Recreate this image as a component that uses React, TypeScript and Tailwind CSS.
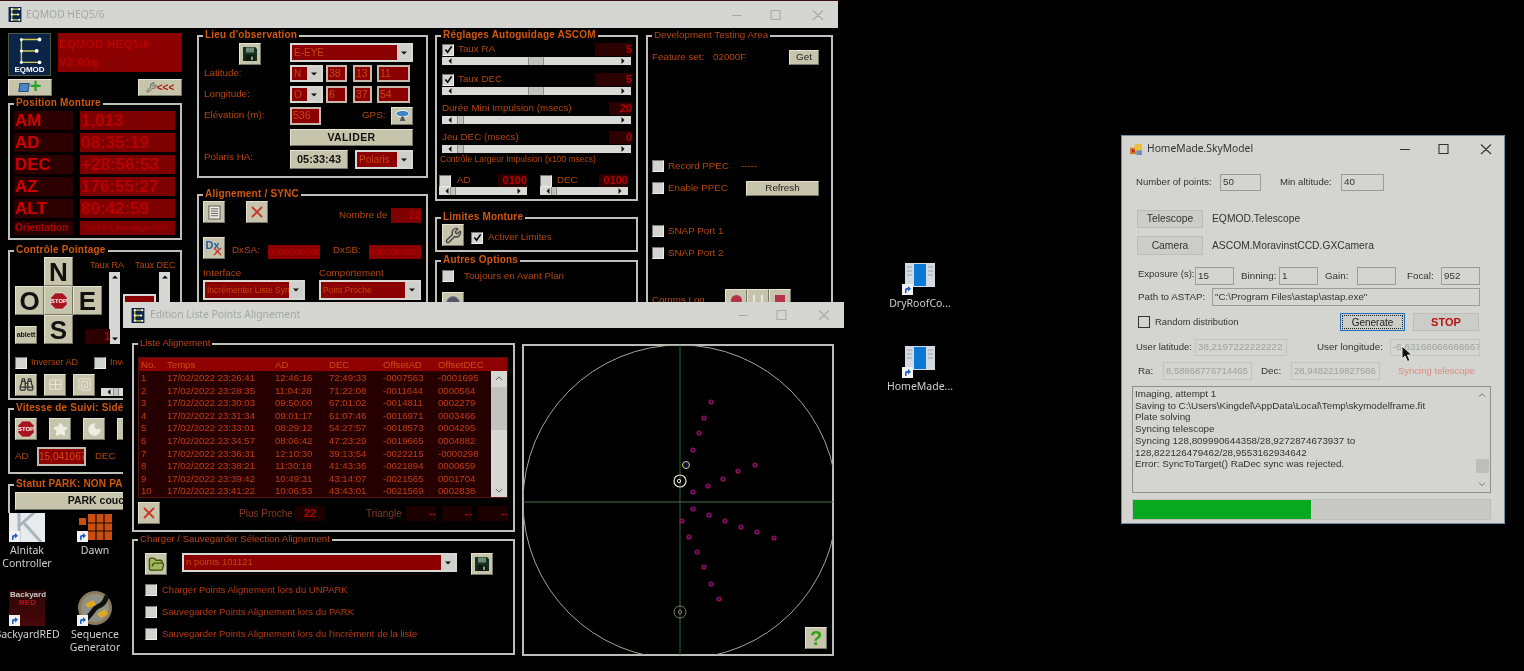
import React from 'react';
import { Binoculars, FolderOpen, Moon, Star, Wrench, X } from 'lucide-react';

const Bevel: React.FC<{ className?: string; children?: React.ReactNode }> = ({ className = '', children }) => (
  <div
    className={`flex items-center justify-center shrink-0 overflow-hidden bg-[#c6c4ab] border border-t-[#e4e3d2] border-l-[#e4e3d2] border-r-[#77766a] border-b-[#77766a] ${className}`}
  >
    {children}
  </div>
);

const Group: React.FC<{ title: string; titleClass?: string; className?: string; children?: React.ReactNode }> = ({
  title,
  titleClass = 'font-bold text-[#d0570c] tracking-[0.2px] text-[10px]',
  className = '',
  children,
}) => (
  <div className={`relative border-2 border-[#c0c0bb] ${className}`}>
    <span className={`absolute -top-[9px] left-[4px] bg-black px-[2px] leading-[14px] whitespace-nowrap ${titleClass}`}>
      {title}
    </span>
    {children}
  </div>
);

const Check: React.FC<{ on?: boolean; className?: string }> = ({ on, className = '' }) => (
  <div
    className={`w-[12px] h-[12px] shrink-0 bg-[#d2d2ce] border border-t-[#77776f] border-l-[#77776f] border-r-[#eee] border-b-[#eee] flex items-center justify-center ${className}`}
  >
    {on && (
      <svg viewBox="0 0 10 10" className="w-[9px] h-[9px]">
        <path d="M1.5 5l2.5 3 4.5-6.5" fill="none" stroke="#000" strokeWidth="1.8" />
      </svg>
    )}
  </div>
);

const Arrow: React.FC<{ dir?: 'down' | 'up' | 'left' | 'right' }> = ({ dir = 'down' }) => {
  const d = { down: 'M0 0h6L3 3z', up: 'M0 3h6L3 0z', left: 'M3 0v6L0 3z', right: 'M0 0v6l3-3z' }[dir];
  return (
    <svg viewBox="0 0 6 6" className="w-[6px] h-[6px]">
      <path d={d} fill="#111" transform={dir === 'down' || dir === 'up' ? 'translate(0 1.5)' : 'translate(1.5 0)'} />
    </svg>
  );
};

const Select: React.FC<{ text: string; className?: string; textClass?: string }> = ({
  text,
  className = '',
  textClass = 'text-[10px]',
}) => (
  <div className={`flex shrink-0 bg-[#d7d7d3] p-[2px] ${className}`}>
    <div className={`flex-1 min-w-0 overflow-hidden whitespace-nowrap bg-[#8b0000] text-[#c8470f] pl-[2px] flex items-center ${textClass}`}>
      {text}
    </div>
    <div className="w-[14px] flex items-center justify-center bg-[#cfcfcb]">
      <Arrow />
    </div>
  </div>
);

const RedBox: React.FC<{ text?: string; className?: string }> = ({ text, className = '' }) => (
  <div className={`shrink-0 overflow-hidden bg-[#8b0000] border-2 border-[#c7b8ac] text-[#c8470f] text-[10.5px] pl-[1px] leading-[13px] ${className}`}>
    {text}
  </div>
);

const ValueBox: React.FC<{ text?: string; className?: string; tone?: string }> = ({
  text,
  className = '',
  tone = 'bg-[#2c0000] text-[#b80000]',
}) => (
  <div className={`shrink-0 font-bold text-[11px] flex items-center leading-none overflow-hidden ${tone} ${className}`}>{text}</div>
);

const HScroll: React.FC<{ thumb: number; thumbW?: number; className?: string }> = ({ thumb, thumbW = 16, className = '' }) => (
  <div className={`relative h-[8px] bg-[#d9d9d5] flex items-center justify-between px-[5px] shrink-0 ${className}`}>
    <Arrow dir="left" />
    <Arrow dir="right" />
    <div className="absolute top-0 h-[8px] bg-[#c3c3be] border-x border-[#8f8f89]" style={{ left: thumb, width: thumbW }} />
  </div>
);

const VScroll: React.FC<{ className?: string }> = ({ className = '' }) => (
  <div className={`flex flex-col items-center justify-between bg-[#d7d7d3] py-[2px] w-[11px] ${className}`}>
    <Arrow dir="up" />
    <Arrow dir="down" />
  </div>
);

const Floppy: React.FC = () => (
  <svg viewBox="0 0 16 16" className="w-[16px] h-[16px]">
    <path d="M1 1h12l2 2v12H1z" fill="#16301f" />
    <rect x="4" y="1.500" width="8" height="5" fill="#6f8a72" />
    <rect x="3.500" y="9" width="9" height="6" fill="#0c1a10" />
    <rect x="9" y="10.500" width="2" height="3.500" fill="#8f9a8d" />
  </svg>
);

const StopSign: React.FC = () => (
  <svg viewBox="0 0 20 20" className="w-[18px] h-[18px]">
    <path d="M6 1h8l5 5v8l-5 5H6l-5-5V6z" fill="#a81420" stroke="#e8d8d8" strokeWidth="0.8" />
    <text x="10" y="12.500" textAnchor="middle" fontSize="6.600" fontWeight="bold" fill="#fff" fontFamily="Liberation Sans">
      STOP
    </text>
  </svg>
);

const RedCross: React.FC = () => <X className="w-[18px] h-[18px] text-[#c9382a]" strokeWidth={2.4} />;

const WinControls: React.FC<{ className?: string; color?: string }> = ({ className = '', color = 'stroke-[#a8aaa6]' }) => (
  <svg viewBox="0 0 100 12" className={`w-[100px] h-[12px] fill-none ${color} ${className}`}>
    <path d="M2 6.500h10M41 1.500h9v9H41zM83 1.500l10 9.500M93 1.500l-10 9.500" strokeWidth="1.1" />
  </svg>
);

const EqmodGlyph: React.FC<{ className?: string }> = ({ className = '' }) => (
  <svg viewBox="0 0 12 14" className={className}>
    <rect width="12" height="14" fill="#0b2447" />
    <path d="M3 2h7M3 7h6M3 12h7M3 2v10" stroke="#c9cf57" strokeWidth="1.2" />
    <g fill="#fff">
      <circle cx="10" cy="2" r="1" />
      <circle cx="9" cy="7" r="1" />
      <circle cx="10" cy="12" r="1" />
      <circle cx="3" cy="2" r="1" />
      <circle cx="3" cy="7" r="1" />
      <circle cx="3" cy="12" r="1" />
    </g>
  </svg>
);

const positionRows = [
  { label: 'AM', value: '1,013' },
  { label: 'AD', value: '08:35:19' },
  { label: 'DEC', value: '+28:56:53' },
  { label: 'AZ', value: '176:55:27' },
  { label: 'ALT', value: '80:42:59' },
];

const LeftColumn: React.FC = () => (
  <div className="w-[174px] shrink-0">
    <div className="flex">
      <div className="w-[43px] h-[43px] bg-[#0b2447] border border-[#4a5a3a] relative flex flex-col items-center shrink-0">
        <svg viewBox="0 0 43 31" className="w-[41px] h-[31px]">
          <path d="M13 5h19M13 17h16M13 29h19M13 5v24" stroke="#c9cf57" strokeWidth="1.5" fill="none" />
          <g fill="#fff">
            <circle cx="32" cy="5" r="2" />
            <circle cx="29" cy="17" r="2" />
            <circle cx="32" cy="29" r="2" />
            <circle cx="13" cy="5" r="1.600" />
            <circle cx="13" cy="17" r="1.600" />
            <circle cx="13" cy="29" r="1.600" />
          </g>
        </svg>
        <span className="text-[8px] font-bold text-white leading-[9px]">EQMOD</span>
      </div>
      <div className="ml-[7px] w-[124px] h-[39px] bg-[#8b0000] text-[#bd0000] font-bold text-[11px] tracking-[0.6px] leading-[18px] pl-[1px] pt-[2px]">
        <div>EQMOD HEQ5/6</div>
        <div>V2.00q</div>
      </div>
    </div>
    <div className="flex justify-between mt-[3px]">
      <Bevel className="w-[44px] h-[17px] gap-[1px]">
        <span className="w-[10px] h-[9px] bg-[#4d86c4] border border-[#26507f] skew-x-[-8deg]" />
        <span className="text-[#22a52b] text-[20px] font-bold leading-none -mt-[3px]">+</span>
      </Bevel>
      <Bevel className="w-[44px] h-[17px]">
        <Wrench className="w-[11px] h-[11px] text-[#555]" />
        <span className="text-[#b3130c] font-bold text-[10px] leading-none">&lt;&lt;&lt;</span>
      </Bevel>
    </div>

    <Group title="Position Monture" className="mt-[7px] h-[137px] pl-[4px] pt-[6px]">
      <div className="flex flex-col gap-[3px]">
        {positionRows.map((row) => (
          <div key={row.label} className="flex gap-[7px] h-[19px]">
            <div className="w-[59px] bg-[#2c0000] text-[#d00000] font-bold text-[17px] leading-[19px] pl-[1px]">{row.label}</div>
            <div className="w-[95px] bg-[#7f0000] text-[#b80000] font-bold text-[17px] leading-[19px] pl-[1px]">{row.value}</div>
          </div>
        ))}
        <div className="flex gap-[7px] h-[14px]">
          <div className="w-[59px] bg-[#2c0000] text-[#b00000] font-bold text-[10px] leading-[14px] pl-[1px]">Orientation</div>
          <div className="w-[95px] bg-[#7f0000] text-[#a80000] font-bold text-[8px] leading-[14px] whitespace-nowrap overflow-hidden pl-[1px]">
            "OUEST, Pointage EST"
          </div>
        </div>
      </div>
    </Group>

    <Group title="Contrôle Pointage" className="mt-[10px] h-[150px] pl-[5px] pt-[5px]">
      <div className="grid grid-cols-[29px_29px_29px_7px_11px_3px_33px_3px_11px] grid-rows-[29px_29px_29px]">
        <Bevel className="col-start-2 row-start-1 text-[26px] font-bold leading-none text-[#111]">N</Bevel>
        <span className="col-start-3 row-start-1 ml-[17px] mt-[2px] text-[9px] text-[#b5460e] whitespace-nowrap">Taux RA</span>
        <span className="col-start-7 row-start-1 ml-[12px] mt-[2px] text-[9px] text-[#b5460e] whitespace-nowrap">Taux DEC</span>
        <VScroll className="col-start-5 row-start-1 row-span-3 mt-[15px]" />
        <VScroll className="col-start-9 row-start-1 row-span-3 mt-[15px]" />
        <div className="col-start-7 row-start-2 row-span-2 mt-[8px] h-[20px] border-2 border-[#d7d7d3] bg-[#8b0000]" />
        <Bevel className="col-start-1 row-start-2 text-[26px] font-bold leading-none text-[#111]">O</Bevel>
        <Bevel className="col-start-2 row-start-2">
          <StopSign />
        </Bevel>
        <Bevel className="col-start-3 row-start-2 text-[26px] font-bold leading-none text-[#111]">E</Bevel>
        <Bevel className="col-start-1 row-start-3 self-end w-[22px] h-[18px] text-[7px] font-bold text-[#111]">ablett</Bevel>
        <Bevel className="col-start-2 row-start-3 text-[26px] font-bold leading-none text-[#111]">S</Bevel>
        <div className="col-start-3 row-start-3 col-span-3 self-end ml-[12px] w-[25px] h-[15px] bg-[#2c0000] text-[#b80000] text-[10px] font-bold text-right leading-[15px]">
          1
        </div>
      </div>
      <div className="flex items-center mt-[12px] text-[9px] text-[#b5460e]">
        <Check />
        <span className="ml-[4px] w-[63px]">Inverser AD</span>
        <Check />
        <span className="ml-[4px]">Inverser DEC</span>
      </div>
      <div className="flex mt-[4px] gap-[7px]">
        <Bevel className="w-[22px] h-[22px]">
          <Binoculars className="w-[15px] h-[15px] text-[#333]" />
        </Bevel>
        <Bevel className="w-[22px] h-[22px]">
          <svg viewBox="0 0 16 16" className="w-[15px] h-[15px] fill-none stroke-[#e9e8dc]">
            <path d="M2 3h12v10H2zM2 8h12M8 3v10" />
          </svg>
        </Bevel>
        <Bevel className="w-[22px] h-[22px]">
          <svg viewBox="0 0 16 16" className="w-[15px] h-[15px] fill-none stroke-[#e9e8dc]">
            <path d="M2 14V2h12v12H5V5h6v6H8V8" />
          </svg>
        </Bevel>
        <HScroll thumb={12} thumbW={6} className="w-[40px] mt-[14px] -ml-[1px]" />
      </div>
    </Group>

    <Group title="Vitesse de Suivi: Sidéral" className="mt-[8px] h-[66px] pl-[5px] pt-[8px]">
      <div className="flex gap-[12px]">
        <Bevel className="w-[22px] h-[22px]">
          <StopSign />
        </Bevel>
        <Bevel className="w-[22px] h-[22px]">
          <Star className="w-[15px] h-[15px] fill-[#eeeee4] text-[#eeeee4]" />
        </Bevel>
        <Bevel className="w-[22px] h-[22px]">
          <Moon className="w-[15px] h-[15px] fill-[#eeeee4] text-[#eeeee4]" />
        </Bevel>
        <Bevel className="w-[22px] h-[22px]" />
      </div>
      <div className="flex items-center mt-[7px] text-[9.800px] text-[#b5460e]">
        <span className="w-[22px]">AD</span>
        <div className="w-[49px] h-[19px] bg-[#8b0000] border-2 border-[#c7b8ac] text-[#d0470f] text-[10px] leading-[15px] overflow-hidden whitespace-nowrap">
          15,041067
        </div>
        <span className="ml-[9px]">DEC</span>
      </div>
    </Group>

    <Group title="Statut PARK: NON PARKÉ" className="mt-[10px] h-[40px] pl-[5px] pt-[6px]">
      <Bevel className="h-[18px] w-[160px] pl-[14px] text-[10.500px] font-bold text-[#111]">PARK couché</Bevel>
    </Group>
  </div>
);

const latLon = [
  { label: 'Latitude:', hemi: 'N', vals: ['38', '13', '11'] },
  { label: 'Longitude:', hemi: 'O', vals: ['6', '37', '54'] },
];

const ObservationColumn: React.FC = () => (
  <div className="w-[231px] ml-[15px] mt-[2px] shrink-0">
    <Group title="Lieu d'observation" className="h-[143px] pl-[5px] pt-[6px] text-[9.800px] text-[#b5460e]">
      <div className="flex h-[19px]">
        <Bevel className="ml-[35px] w-[22px] h-[22px]">
          <Floppy />
        </Bevel>
        <Select text="E-EYE" className="ml-[29px] w-[123px] h-[19px]" />
      </div>
      {latLon.map((row, i) => (
        <div key={row.label} className={`flex items-center h-[17px] ${i === 0 ? 'mt-[3px]' : 'mt-[4px]'}`}>
          <span className="w-[86px]">{row.label}</span>
          <Select text={row.hemi} className="w-[33px] h-[17px]" />
          <RedBox text={row.vals[0]} className="ml-[3px] w-[21px] h-[17px]" />
          <RedBox text={row.vals[1]} className="ml-[6px] w-[19px] h-[17px]" />
          <RedBox text={row.vals[2]} className="ml-[5px] w-[33px] h-[17px]" />
        </div>
      ))}
      <div className="flex items-center mt-[3px] h-[19px]">
        <span className="w-[86px]">Elévation (m):</span>
        <RedBox text="536" className="w-[31px] h-[18px]" />
        <span className="ml-[41px] w-[29px]">GPS:</span>
        <Bevel className="w-[22px] h-[18px]">
          <svg viewBox="0 0 16 14" className="w-[15px] h-[13px]">
            <ellipse cx="8" cy="5" rx="7" ry="3.500" fill="#3f87c8" stroke="#fff" />
            <path d="M7 8l-2 5h6L9 8z" fill="#555" />
          </svg>
        </Bevel>
      </div>
      <div className="mt-[4px] flex">
        <Bevel className="ml-[86px] w-[123px] h-[17px] text-[10.500px] font-bold tracking-[0.4px] text-[#111]">VALIDER</Bevel>
      </div>
      <div className="mt-[4px] flex items-center h-[19px]">
        <span className="w-[86px] -mt-[5px]">Polaris HA:</span>
        <Bevel className="w-[58px] h-[19px] text-[11px] font-bold text-[#111]">05:33:43</Bevel>
        <Select text="Polaris" className="ml-[7px] w-[58px] h-[19px]" />
      </div>
    </Group>

    <Group title="Alignement / SYNC" className="mt-[16px] h-[130px] pl-[4px] pt-[5px] text-[9.800px] text-[#b5460e]">
      <div className="flex items-start">
        <Bevel className="w-[22px] h-[22px]">
          <svg viewBox="0 0 14 16" className="w-[13px] h-[15px]">
            <rect x="1" y="1" width="12" height="14" fill="#f0efe8" stroke="#555" />
            <path d="M3 4h8M3 6.500h8M3 9h8M3 11.500h8" stroke="#555" />
          </svg>
        </Bevel>
        <Bevel className="ml-[21px] w-[22px] h-[22px]">
          <RedCross />
        </Bevel>
        <span className="ml-[71px] mt-[7px] w-[52px] whitespace-nowrap">Nombre de</span>
        <ValueBox text="22" tone="bg-[#7f0000] text-[#b40000]" className="mt-[7px] w-[30px] h-[15px] justify-end" />
      </div>
      <div className="flex items-end mt-[14px]">
        <Bevel className="relative w-[22px] h-[22px]">
          <span className="text-[11px] font-bold text-[#1d5fb0] -mt-[6px] -ml-[3px]">Dx</span>
          <X className="absolute right-0 bottom-0 w-[13px] h-[13px] text-[#c9382a]" strokeWidth={2.6} />
        </Bevel>
        <span className="ml-[7px] w-[36px] pb-[1px]">DxSA:</span>
        <div className="w-[52px] h-[14px] bg-[#8b0000] text-[#b80000] text-[9.500px] leading-[14px] overflow-hidden">0000000000</div>
        <span className="ml-[13px] w-[36px] pb-[1px]">DxSB:</span>
        <div className="w-[52px] h-[14px] bg-[#8b0000] text-[#b80000] text-[9.500px] leading-[14px] overflow-hidden">0000000000</div>
      </div>
      <div className="flex mt-[7px] h-[14px]">
        <span className="w-[116px]">Interface</span>
        <span>Comportement</span>
      </div>
      <div className="flex">
        <Select text="Incrémenter Liste Sync" className="w-[102px] h-[20px]" textClass="text-[8.500px]" />
        <Select text="Point Proche" className="ml-[14px] w-[102px] h-[20px]" textClass="text-[8.500px]" />
      </div>
    </Group>
  </div>
);

const PulseRow: React.FC<{ label: string; checked?: boolean; value: string; boxClass: string; thumb: number; thumbW: number; rowMt: string }> = ({
  label,
  checked,
  value,
  boxClass,
  thumb,
  thumbW,
  rowMt,
}) => (
  <div className={rowMt}>
    <div className="flex items-center h-[13px]">
      {checked !== undefined && <Check on={checked} />}
      <span className={checked !== undefined ? 'ml-[4px]' : ''}>{label}</span>
      <ValueBox text={value} className={`ml-auto h-[13px] justify-end ${boxClass}`} />
    </div>
    <HScroll thumb={thumb} thumbW={thumbW} className="w-[189px] mt-[1px]" />
  </div>
);

const GuideColumn: React.FC = () => (
  <div className="w-[203px] ml-[7px] mt-[2px] shrink-0 text-[9.800px] text-[#b5460e]">
    <Group title="Réglages Autoguidage ASCOM" className="h-[166px] pl-[5px] pr-[4px] pt-[6px]">
      <PulseRow label="Taux RA" checked value="5" boxClass="w-[37px]" thumb={86} thumbW={16} rowMt="" />
      <PulseRow label="Taux DEC" checked value="5" boxClass="w-[37px]" thumb={86} thumbW={16} rowMt="mt-[8px]" />
      <PulseRow label="Durée Mini Impulsion (msecs)" value="20" boxClass="w-[23px]" thumb={15} thumbW={7} rowMt="mt-[7px]" />
      <PulseRow label="Jeu DEC (msecs)" value="0" boxClass="w-[23px]" thumb={15} thumbW={7} rowMt="mt-[7px]" />
      <div className="-ml-[2px] text-[8.500px] leading-[13px]">Contrôle Largeur Impulsion (x100 msecs)</div>
      <div className="flex mt-[8px] -ml-[3px]">
        <div className="w-[88px]">
          <div className="flex items-center h-[13px]">
            <Check />
            <span className="ml-[6px]">AD</span>
            <ValueBox text="0100" className="ml-auto w-[29px] h-[13px] justify-end" />
          </div>
          <HScroll thumb={11} thumbW={6} className="w-[88px]" />
        </div>
        <div className="w-[88px] ml-[13px]">
          <div className="flex items-center h-[13px]">
            <Check />
            <span className="ml-[5px]">DEC</span>
            <ValueBox text="0100" className="ml-auto w-[29px] h-[13px] justify-end" />
          </div>
          <HScroll thumb={11} thumbW={6} className="w-[88px]" />
        </div>
      </div>
    </Group>
    <Group title="Limites Monture" className="mt-[16px] h-[35px] pl-[5px] pt-[5px]">
      <div className="flex items-center">
        <Bevel className="w-[22px] h-[22px]">
          <Wrench className="w-[17px] h-[17px] text-[#444]" />
        </Bevel>
        <Check on className="ml-[7px] mt-[5px]" />
        <span className="ml-[5px] mt-[5px]">Activer Limites</span>
      </div>
    </Group>
    <Group title="Autres Options" className="mt-[8px] h-[60px] pl-[5px] pt-[7px]">
      <div className="flex items-center">
        <Check />
        <span className="ml-[10px]">Toujours en Avant Plan</span>
      </div>
      <Bevel className="w-[22px] h-[22px] mt-[8px]">
        <span className="w-[14px] h-[14px] rounded-full bg-[#556] border border-[#889]" />
      </Bevel>
    </Group>
  </div>
);

const DevColumn: React.FC = () => (
  <div className="w-[187px] ml-[8px] mt-[2px] shrink-0 text-[9.800px] text-[#b5460e]">
    <Group title="Development Testing Area" titleClass="text-[#b5460e] text-[9.800px]" className="h-[300px] pl-[4px] pr-[12px] pt-[13px]">
      <div className="flex items-center h-[15px]">
        <span className="w-[61px]">Feature set:</span>
        <span>02000F</span>
        <Bevel className="ml-auto w-[30px] h-[15px] text-[#222]">Get</Bevel>
      </div>
      <div className="flex items-center mt-[95px] h-[12px]">
        <Check />
        <span className="ml-[4px] w-[73px]">Record PPEC</span>
        <span>-----</span>
      </div>
      <div className="flex items-center mt-[10px] h-[12px]">
        <Check />
        <span className="ml-[4px]">Enable PPEC</span>
        <Bevel className="ml-auto w-[73px] h-[15px] text-[#222]">Refresh</Bevel>
      </div>
      <div className="flex items-center mt-[31px] h-[12px]">
        <Check />
        <span className="ml-[4px]">SNAP Port 1</span>
      </div>
      <div className="flex items-center mt-[10px] h-[12px]">
        <Check />
        <span className="ml-[4px]">SNAP Port 2</span>
      </div>
      <div className="flex items-center mt-[30px]">
        <span className="w-[73px]">Comms Log</span>
        <Bevel className="w-[22px] h-[22px]">
          <span className="w-[11px] h-[11px] rounded-full bg-[#b5304a]" />
        </Bevel>
        <Bevel className="w-[22px] h-[22px]">
          <span className="w-[10px] h-[11px] border-x-2 border-[#e9e8dc]" />
        </Bevel>
        <Bevel className="w-[22px] h-[22px]">
          <span className="w-[10px] h-[10px] bg-[#b5304a]" />
        </Bevel>
      </div>
    </Group>
  </div>
);

const EqmodWindow: React.FC = () => (
  <div className="absolute left-0 top-0 w-[838px] h-[513px] overflow-hidden bg-black border-t border-[#3a1010]">
    <div className="h-[27px] bg-[#d5d6d1] flex items-center pl-[8px]">
      <EqmodGlyph className="w-[14px] h-[15px]" />
      <span className="ml-[4px] text-[10.300px] text-[#a4a7a5] [font-family:'Noto_Sans',sans-serif]">EQMOD HEQ5/6</span>
      <WinControls className="ml-auto mr-[8px]" />
    </div>
    <div className="flex pl-[8px] pt-[5px]">
      <LeftColumn />
      <ObservationColumn />
      <GuideColumn />
      <DevColumn />
    </div>
  </div>
);

const alignPoints = [
  ['1', '17/02/2022 23:26:41', '12:46:16', '72:49:33', '-0007563', '-0001695'],
  ['2', '17/02/2022 23:28:35', '11:04:28', '71:22:08', '-0011644', '0000564'],
  ['3', '17/02/2022 23:30:03', '09:50:00', '67:01:02', '-0014811', '0002279'],
  ['4', '17/02/2022 23:31:34', '09:01:17', '61:07:46', '-0016971', '0003466'],
  ['5', '17/02/2022 23:33:01', '08:29:12', '54:27:57', '-0018573', '0004295'],
  ['6', '17/02/2022 23:34:57', '08:06:42', '47:23:29', '-0019665', '0004882'],
  ['7', '17/02/2022 23:36:31', '12:10:30', '39:13:54', '-0022215', '-0000298'],
  ['8', '17/02/2022 23:38:21', '11:30:18', '41:43:36', '-0021894', '0000659'],
  ['9', '17/02/2022 23:39:42', '10:49:31', '43:14:07', '-0021565', '0001704'],
  ['10', '17/02/2022 23:41:22', '10:06:53', '43:43:01', '-0021569', '0002838'],
];

const listCols = 'grid grid-cols-[26px_108px_54px_54px_55px_1fr] pl-[2px]';

// plotted points, in page coordinates
const skyPoints: [number, number][] = [
  [711, 402], [704, 418], [699, 433], [693, 450], [693, 492], [708, 486], [723, 479], [738, 471], [755, 465],
  [693, 509], [709, 515], [725, 521], [741, 527], [757, 532], [774, 538], [682, 521], [689, 537], [697, 552],
  [704, 567], [711, 584], [719, 599],
];

const SkyChart: React.FC = () => (
  <svg viewBox="522 344 312 312" className="w-[312px] h-[312px]">
    <defs>
      <clipPath id="chartClip">
        <rect x="523" y="345" width="310" height="310" />
      </clipPath>
    </defs>
    <rect x="523" y="345" width="310" height="310" fill="none" stroke="#bdbdb8" strokeWidth="2" />
    <g clipPath="url(#chartClip)" fill="none">
      <circle cx="680" cy="502" r="157" stroke="#9fa59d" />
      <path d="M680 344v312" stroke="#2c6a2c" />
      <path d="M522 502h312" stroke="#4e6e4e" />
      {skyPoints.map(([x, y]) => (
        <circle key={`${x}-${y}`} cx={x} cy={y} r="2" fill="#2a0a50" stroke="#a0105c" strokeWidth="1.2" />
      ))}
      <circle cx="686" cy="465" r="3.500" fill="#0a0a40" stroke="#d6d66a" />
      <circle cx="680" cy="481" r="6" stroke="#e0e0dc" strokeWidth="1.2" />
      <circle cx="679" cy="481" r="1.700" stroke="#e0e0dc" />
      <circle cx="680" cy="612" r="6" stroke="#777" />
      <circle cx="680" cy="612" r="1.700" stroke="#777" />
    </g>
  </svg>
);

const editTitle = 'text-[#c0401a] text-[9.600px]';

const EditWindow: React.FC = () => (
  <div className="absolute left-[123px] top-[302px] w-[721px] h-[363px] bg-black">
    <div className="h-[26px] bg-[#d5d6d1] flex items-center pl-[8px]">
      <EqmodGlyph className="w-[14px] h-[15px]" />
      <span className="ml-[5px] text-[10.300px] text-[#a4a7a5] [font-family:'Noto_Sans',sans-serif]">Edition Liste Points Alignement</span>
      <WinControls className="ml-auto mr-[8px]" />
    </div>
    <div className="flex pl-[9px] pt-[15px]">
      <div className="w-[383px] shrink-0">
        <Group title="Liste Alignement" titleClass={editTitle} className="h-[189px] pl-[4px] pr-[5px] pt-[12px]">
          <div className="h-[141px] bg-[#260000] border border-[#551010] text-[9.600px] text-[#c23a10] overflow-hidden">
            <div className={`${listCols} h-[13px] bg-[#8f0000] leading-[13px] text-[#d04a14] items-center`}>
              {['No.', 'Temps', 'AD', 'DEC', 'OffsetAD', 'OffsetDEC'].map((head) => (
                <span key={head}>{head}</span>
              ))}
            </div>
            <div className="flex">
              <div className="flex-1 pt-[1px]">
                {alignPoints.map((row) => (
                  <div key={row[0]} className={`${listCols} h-[12.600px] leading-[12.600px]`}>
                    {row.map((cell, i) => (
                      <span key={i} className="whitespace-nowrap">
                        {cell}
                      </span>
                    ))}
                  </div>
                ))}
              </div>
              <div className="w-[16px] h-[127px] bg-[#d7d7d3] flex flex-col items-center py-[5px]">
                <svg viewBox="0 0 10 6" className="w-[8px] h-[5px] fill-none stroke-[#444] shrink-0"><path d="M1 5l4-4 4 4" /></svg>
                <div className="w-[16px] h-[43px] bg-[#c2c2be] mt-[6px]" />
                <svg viewBox="0 0 10 6" className="w-[8px] h-[5px] fill-none stroke-[#444] mt-auto shrink-0"><path d="M1 1l4 4 4-4" /></svg>
              </div>
            </div>
          </div>
          <div className="flex items-center mt-[4px] text-[10px] text-[#8a3a22]">
            <Bevel className="w-[22px] h-[22px]">
              <RedCross />
            </Bevel>
            <span className="ml-[79px] w-[56px] whitespace-nowrap">Plus Proche</span>
            <ValueBox text="22" tone="bg-[#1c0000] text-[#b80000]" className="w-[30px] h-[15px] justify-center" />
            <span className="ml-[41px] w-[40px]">Triangle</span>
            <ValueBox text="--" tone="bg-[#1c0000] text-[#b80000]" className="w-[30px] h-[15px] justify-end" />
            <ValueBox text="--" tone="bg-[#1c0000] text-[#b80000]" className="ml-[6px] w-[30px] h-[15px] justify-end" />
            <ValueBox text="--" tone="bg-[#1c0000] text-[#b80000]" className="ml-[6px] w-[30px] h-[15px] justify-end" />
          </div>
        </Group>
        <Group
          title="Charger / Sauvegarder Sélection Alignement"
          titleClass={editTitle}
          className="mt-[7px] h-[116px] pl-[11px] pt-[12px] text-[9.500px] text-[#b83a12]"
        >
          <div className="flex items-start">
            <Bevel className="w-[22px] h-[22px]">
              <FolderOpen className="w-[17px] h-[17px] text-[#3c5a14] fill-[#a6b65a]" />
            </Bevel>
            <Select text="n points 101121" textClass="text-[9.500px]" className="ml-[15px] w-[275px] h-[19px]" />
            <Bevel className="ml-[14px] w-[22px] h-[22px]">
              <Floppy />
            </Bevel>
          </div>
          {['Charger Points Alignement lors du UNPARK', 'Sauvegarder Points Alignement lors du PARK', "Sauvegarder Points Alignement lors du l'incrément de la liste"].map(
            (label, i) => (
              <div key={label} className={`flex items-center h-[12px] ${i === 0 ? 'mt-[9px]' : 'mt-[10px]'}`}>
                <Check />
                <span className="ml-[5px] whitespace-nowrap">{label}</span>
              </div>
            ),
          )}
        </Group>
      </div>
      <div className="relative ml-[7px] mt-[1px]">
        <SkyChart />
        <Bevel className="absolute right-[7px] bottom-[7px] w-[22px] h-[22px]">
          <span className="text-[20px] font-bold text-[#2fa313] leading-none">?</span>
        </Bevel>
      </div>
    </div>
  </div>
);

const Field: React.FC<{ text?: string; className?: string; disabled?: boolean }> = ({ text, className = '', disabled }) => (
  <div
    className={`shrink-0 h-full border pl-[2px] flex items-center overflow-hidden whitespace-nowrap ${
      disabled ? 'text-[#a0a2a0] border-[#c2c3bf]' : 'text-[#333] border-[#9b9c98]'
    } ${className}`}
  >
    {text}
  </div>
);

const WinButton: React.FC<{ className?: string; children?: React.ReactNode }> = ({ className = '', children }) => (
  <div className={`shrink-0 flex items-center justify-center bg-[#ccccc8] border border-[#bcbdb9] ${className}`}>{children}</div>
);

const logLines = [
  'Imaging, attempt 1',
  'Saving to C:\\Users\\Kingdel\\AppData\\Local\\Temp\\skymodelframe.fit',
  'Plate solving',
  'Syncing telescope',
  'Syncing 128,809990644358/28,9272874673937 to',
  '128,822126479462/28,9553162934642',
  'Error: SyncToTarget() RaDec sync was rejected.',
];

const SkyModelWindow: React.FC = () => (
  <div className="absolute left-[1121px] top-[135px] w-[384px] h-[389px] bg-[#d4d5d0] border border-[#6d8da3] text-[9.800px] text-[#333]">
    <div className="h-[26px] flex items-center pl-[8px]">
      <svg viewBox="0 0 14 14" className="w-[13px] h-[13px]">
        <rect x="0" y="5" width="7" height="7" fill="#c9812a" />
        <rect x="5" y="1" width="8" height="8" fill="#e6c23c" />
        <rect x="2" y="7" width="3" height="3" fill="#c22" />
        <rect x="7" y="8" width="6" height="5" fill="#6a8fc8" />
      </svg>
      <span className="ml-[4px] text-[10.300px] text-[#333] [font-family:'Noto_Sans',sans-serif]">HomeMade.SkyModel</span>
      <WinControls className="ml-auto mr-[6px]" color="stroke-[#333]" />
    </div>
    <div className="pl-[14px] pr-[24px]">
      <div className="flex items-center h-[17px] mt-[12px]">
        <span className="w-[84px] text-[9.600px]">Number of points:</span>
        <Field text="50" className="w-[41px]" />
        <span className="ml-[19px] w-[61px] text-[9.600px]">Min altitude:</span>
        <Field text="40" className="w-[43px]" />
      </div>
      <div className="flex items-center mt-[19px]">
        <WinButton className="ml-[1px] w-[66px] h-[18px] text-[10.300px]">Telescope</WinButton>
        <span className="ml-[9px] text-[10.300px]">EQMOD.Telescope</span>
      </div>
      <div className="flex items-center mt-[8px]">
        <WinButton className="ml-[1px] w-[66px] h-[19px] text-[10.300px]">Camera</WinButton>
        <span className="ml-[9px] text-[10.300px]">ASCOM.MoravinstCCD.GXCamera</span>
      </div>
      <div className="flex items-center h-[18px] mt-[12px] pl-[2px]">
        <span className="w-[57px] -mt-[4px] whitespace-nowrap text-[9.500px]">Exposure (s):</span>
        <Field text="15" className="w-[39px]" />
        <span className="ml-[7px] w-[38px]">Binning:</span>
        <Field text="1" className="w-[39px]" />
        <span className="ml-[7px] w-[32px]">Gain:</span>
        <Field className="w-[39px]" />
        <span className="ml-[11px] w-[34px]">Focal:</span>
        <Field text="952" className="w-[39px]" />
      </div>
      <div className="flex items-center h-[18px] mt-[3px] pl-[2px]">
        <span className="w-[74px]">Path to ASTAP:</span>
        <Field text={'"C:\\Program Files\\astap\\astap.exe"'} className="w-[268px]" />
      </div>
      <div className="flex items-center h-[18px] mt-[7px] pl-[2px]">
        <div className="w-[12px] h-[12px] border border-[#333]" />
        <span className="ml-[5px] text-[9.400px]">Random distribution</span>
        <div className="ml-auto w-[65px] h-[18px] bg-[#ccccc8] border border-[#1d6fb8] p-[1px] shrink-0">
          <div className="h-full border border-dotted border-[#222] flex items-center justify-center text-[#222] text-[10px]">Generate</div>
        </div>
        <WinButton className="ml-[8px] mr-[1px] w-[66px] h-[18px] text-[#b51313] font-bold text-[11px]">STOP</WinButton>
      </div>
      <div className="flex items-center h-[17px] mt-[8px] whitespace-nowrap">
        <span className="w-[59px] text-[9.500px]">User latitude:</span>
        <Field text="38,2197222222222" disabled className="w-[92px]" />
        <span className="ml-[30px] w-[73px]">User longitude:</span>
        <Field text="-6,63166666666667" disabled className="w-[90px]" />
      </div>
      <div className="flex items-center h-[18px] mt-[6px] pl-[2px] whitespace-nowrap">
        <span className="w-[25px]">Ra:</span>
        <Field text="8,58868776714465" disabled className="w-[89px] text-[9.500px]" />
        <span className="ml-[9px] w-[30px]">Dec:</span>
        <Field text="28,9482219827586" disabled className="w-[89px] text-[9.500px]" />
        <span className="ml-[18px] text-[#e08b80] text-[9.500px]">Syncing telescope</span>
      </div>
      <div className="flex -ml-[4px] w-[359px] h-[107px] mt-[6px] border border-[#8e8f8b] text-[#333]">
        <div className="flex-1 pl-[2px] pt-[1px] leading-[11.700px] whitespace-nowrap">
          {logLines.map((line) => (
            <div key={line}>{line}</div>
          ))}
        </div>
        <div className="w-[16px] flex flex-col items-center py-[6px]">
          <svg viewBox="0 0 10 6" className="w-[8px] h-[5px] fill-none stroke-[#555]"><path d="M1 5l4-4 4 4" /></svg>
          <div className="w-[13px] h-[15px] bg-[#bdbeba] mt-[62px]" />
          <svg viewBox="0 0 10 6" className="w-[8px] h-[5px] fill-none stroke-[#555] mt-[9px]"><path d="M1 1l4 4 4-4" /></svg>
        </div>
      </div>
      <div className="-ml-[4px] w-[359px] h-[21px] mt-[6px] bg-[#c8c9c5] border border-[#bcbdb9]">
        <div className="h-full w-[178px] bg-[#08a820]" />
      </div>
    </div>
  </div>
);

const Shortcut: React.FC = () => (
  <svg viewBox="0 0 11 11" className="absolute left-0 bottom-0 w-[11px] h-[11px]">
    <rect width="11" height="11" fill="#f2f2f2" />
    <path d="M3 9V6c0-1.500 1-2.200 3-2.200V2l3 2.800-3 2.800V5.600C4.600 5.600 4.500 6.500 4.500 9z" fill="#1c5fc4" />
  </svg>
);

const DesktopIcon: React.FC<{ left: string; top: string; label: React.ReactNode; children: React.ReactNode }> = ({
  left,
  top,
  label,
  children,
}) => (
  <div className={`absolute w-[72px] flex flex-col items-center text-center ${left} ${top}`}>
    <div className="relative w-[36px] h-[36px]">
      {children}
      <Shortcut />
    </div>
    <div className="mt-[2px] text-[10.500px] leading-[13px] text-[#cfcfcf] [font-family:'Noto_Sans',sans-serif] whitespace-nowrap">{label}</div>
  </div>
);

const AppIcon: React.FC = () => (
  <svg viewBox="0 0 32 32" className="w-[32px] h-[32px] ml-[2px]">
    <rect x="1" y="4" width="30" height="24" fill="#d4dadf" />
    <rect x="10" y="5" width="12" height="22" fill="#0a78d4" />
    <path d="M3 8h5M3 12h5M3 16h5M24 8h5M24 12h5M24 16h5" stroke="#9aa4ab" />
  </svg>
);

const DesktopIcons: React.FC = () => (
  <>
    <DesktopIcon left="left-[-9px]" top="top-[506px]" label={<>Alnitak<br />Controller</>}>
      <svg viewBox="0 0 36 36" className="w-[36px] h-[36px]">
        <rect width="36" height="36" fill="#e8ecef" />
        <path d="M10 4v32M10 20L28 4M14 16l18 20" stroke="#aab4bc" strokeWidth="3" fill="none" />
      </svg>
    </DesktopIcon>
    <DesktopIcon left="left-[59px]" top="top-[506px]" label="Dawn">
      <svg viewBox="0 0 36 36" className="w-[36px] h-[36px]">
        <rect x="11" y="8" width="24" height="26" fill="#c84f10" />
        <path d="M19 8v26M27 8v26M11 17h24M11 25h24" stroke="#1c0a00" strokeWidth="1.200" />
        <rect x="2" y="12" width="7" height="7" fill="#c84f10" />
      </svg>
    </DesktopIcon>
    <DesktopIcon left="left-[-9px]" top="top-[590px]" label="BackyardRED">
      <div className="w-[36px] h-[36px] bg-gradient-to-b from-[#2a0505] to-[#4a0808]">
        <span className="block text-[8px] leading-[9px] font-bold text-[#c9c9c9] pl-[1px]">Backyard</span>
        <span className="block text-[8px] leading-[8px] font-bold text-[#c01010] pl-[1px]">RED</span>
      </div>
    </DesktopIcon>
    <DesktopIcon left="left-[59px]" top="top-[590px]" label={<>Sequence<br />Generator</>}>
      <svg viewBox="0 0 36 36" className="w-[36px] h-[36px]">
        <circle cx="18" cy="18" r="17" fill="#8b7a5a" />
        <circle cx="18" cy="18" r="14" fill="#8f9088" />
        <path d="M8 30C16 24 16 18 22 16s6-6 8-10" stroke="#111" strokeWidth="5" fill="none" />
        <path d="M8 14l8-4 3 5-8 3zM20 24l8-5 3 5-7 4z" fill="#e0aa20" />
      </svg>
    </DesktopIcon>
    <DesktopIcon left="left-[884px]" top="top-[259px]" label="DryRoofCo...">
      <AppIcon />
    </DesktopIcon>
    <DesktopIcon left="left-[884px]" top="top-[342px]" label="HomeMade...">
      <AppIcon />
    </DesktopIcon>
  </>
);

const App: React.FC = () => (
  <div className="relative w-[1524px] h-[671px] overflow-hidden bg-black blur-[0.35px] [font-family:'Liberation_Sans',sans-serif]">
    <DesktopIcons />
    <EqmodWindow />
    <EditWindow />
    <SkyModelWindow />
    <svg viewBox="0 0 12 18" className="absolute left-[1401px] top-[345px] w-[12px] h-[18px]">
      <path d="M1 1v13l3-3 2.500 5.500 2.500-1L6.500 10H11z" fill="#111" stroke="#eee" strokeWidth="1" />
    </svg>
  </div>
);

export default App;
